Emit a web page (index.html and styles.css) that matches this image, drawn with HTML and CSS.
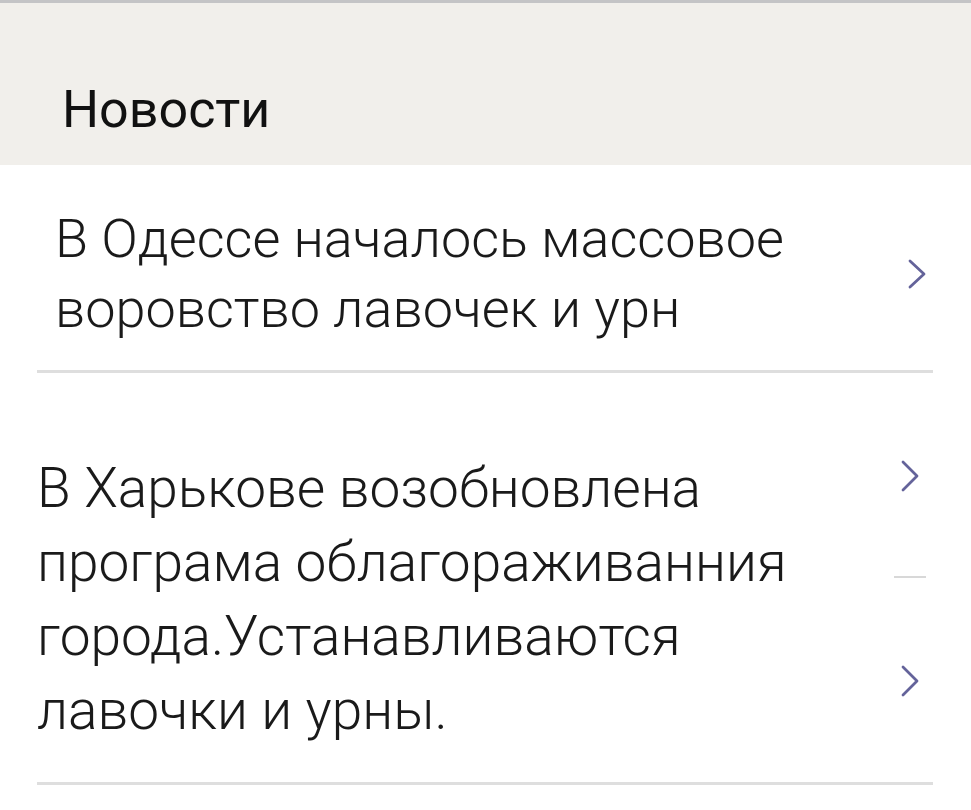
FILE: index.html
```html
<!DOCTYPE html>
<html lang="ru">
<head>
<meta charset="utf-8">
<title>Новости</title>
<link rel="stylesheet" href="styles.css">
</head>
<body>
<header class="header">
  <h1 class="header-title">Новости</h1>
</header>
<main class="list">
  <div class="item item-first">
    <p class="item-text item-text-first">В Одессе началось массовое<br>воровство лавочек и урн</p>
    <svg class="chevron" viewBox="0 0 18 30" width="18" height="30"><path d="M2 2 L16 15 L2 28"/></svg>
  </div>
  <div class="item item-second">
    <p class="item-text item-text-second">В Харькове возобновлена<br>програма облагораживанния<br>города.Устанавливаются<br>лавочки и урны.</p>
    <div class="side">
      <svg class="chevron" viewBox="0 0 18 32" width="18" height="32"><path d="M2 2 L16 16 L2 30"/></svg>
      <div class="side-rule"></div>
      <svg class="chevron" viewBox="0 0 18 32" width="18" height="32"><path d="M2 2 L16 16 L2 30"/></svg>
    </div>
  </div>
</main>
</body>
</html>
```
FILE: styles.css
```css
html, body {
  margin: 0;
  padding: 0;
  background: #ffffff;
}
body {
  width: 971px;
  height: 810px;
  overflow: hidden;
  font-family: Roboto, "Noto Sans", sans-serif;
}
.header {
  background: #f1efeb;
  border-top: 3px solid #c4c4c6;
  padding: 77px 0 25px 62px;
}
.header-title {
  margin: 0;
  font-size: 52px;
  line-height: 60px;
  font-weight: 400;
  color: #111111;
}
.list {
  padding: 0 38px 0 37px;
}
.item {
  display: flex;
  justify-content: space-between;
  border-bottom: 3px solid #dedede;
}
.item-first {
  align-items: center;
  padding: 39px 7px 26px 18px;
}
.item-second {
  align-items: flex-start;
  padding: 78px 7px 35px 0;
}
.item-text {
  margin: 0;
  font-weight: 300;
  color: #1a1a1a;
}
.item-text-first {
  font-size: 54px;
  line-height: 70px;
}
.item-text-second {
  font-size: 55px;
  line-height: 74px;
}
.chevron {
  display: block;
  fill: none;
  stroke: #64639a;
  stroke-width: 2.8;
  stroke-linecap: round;
  stroke-linejoin: round;
}
.side {
  display: flex;
  flex-direction: column;
  align-items: center;
  margin-top: 9px;
}
.side-rule {
  width: 32px;
  height: 2px;
  background: #d8d8d8;
  margin: 84px 0 87px 0;
}
```
